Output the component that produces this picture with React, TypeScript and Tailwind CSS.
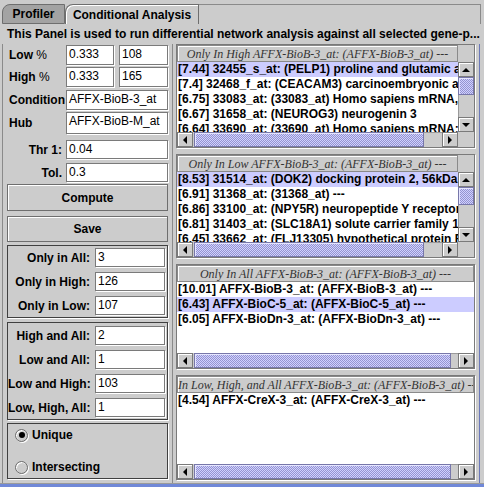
import React from 'react';

type Dir = 'up' | 'down' | 'left' | 'right';

function Arrow({ dir }: { dir: Dir }) {
  const vertical = dir === 'up' || dir === 'down';
  const pts = {
    up: '0,4 4,0 8,4',
    down: '0,0 8,0 4,4',
    left: '4,0 4,8 0,4',
    right: '0,0 0,8 4,4',
  }[dir];
  return (
    <svg width={vertical ? 8 : 4} height={vertical ? 4 : 8} viewBox={vertical ? '0 0 8 4' : '0 0 4 8'}>
      <polygon points={pts} fill="#000" />
    </svg>
  );
}

function ArrowButton({ dir }: { dir: Dir }) {
  const size = dir === 'up' || dir === 'down' ? 'h-[15px] w-full' : 'w-[16px] h-full';
  return (
    <div className={`${size} shrink-0 flex items-center justify-center bg-[#cccccc] border border-[#7a7a7a] shadow-[inset_1px_1px_0_#ffffff]`}>
      <Arrow dir={dir} />
    </div>
  );
}

const thumb =
  'bg-[#ccccff] bg-[repeating-conic-gradient(#9595d0_0_25%,#d0d0ff_0_50%)] bg-[length:2px_2px] border border-[#7777aa] shadow-[inset_1px_1px_0_#e6e6ff]';

function HScroll({ thumbW }: { thumbW: string }) {
  return (
    <div className="flex h-[15px] flex-1 bg-[#cccccc]">
      <ArrowButton dir="left" />
      <div className={`${thumbW} ml-[1px] h-full ${thumb}`} />
      <div className="flex-1 border-t border-[#9a9a9a]" />
      <ArrowButton dir="right" />
    </div>
  );
}

function VScroll() {
  return (
    <div className="flex w-[16px] shrink-0 flex-col bg-[#cccccc]">
      <ArrowButton dir="up" />
      <div className={`h-[18px] w-full ${thumb}`} />
      <div className="flex-1 border-l border-[#9a9a9a]" />
      <ArrowButton dir="down" />
    </div>
  );
}

function ListPane({
  title,
  rows,
  selected,
  vscroll,
  h,
  left,
}: {
  title: string;
  rows: string[];
  selected: number;
  vscroll: boolean;
  h: string;
  left?: boolean;
}) {
  return (
    <div className={`${h} flex flex-col border border-[#7a7a7a] shadow-[1px_1px_0_#ffffff]`}>
      <div className="flex h-[17px] shrink-0">
        <div
          className={`flex flex-1 items-center ${left ? 'justify-start' : 'justify-center'} overflow-hidden whitespace-nowrap border border-[#8a8a8a] bg-[#cccccc] shadow-[inset_1px_1px_0_#ffffff] font-['Liberation_Serif',serif] text-[12px] italic text-[#333333]`}
        >
          {title}
        </div>
        {vscroll && <div className="w-[16px] bg-[#cccccc]" />}
      </div>
      <div className="flex min-h-0 flex-1">
        <div className="flex-1 overflow-hidden bg-white">
          {rows.map((r, i) => (
            <div
              key={i}
              className={`h-[15px] whitespace-nowrap pl-[1px] text-[12px] font-bold leading-[15px] ${i === selected ? 'bg-[#ccccff]' : ''}`}
            >
              {r}
            </div>
          ))}
        </div>
        {vscroll && <VScroll />}
      </div>
      <div className="flex h-[15px] shrink-0">
        <HScroll thumbW={vscroll ? 'w-[230px]' : 'w-[257px]'} />
        {vscroll && <div className="w-[16px] bg-[#cccccc]" />}
      </div>
    </div>
  );
}

function Field({ value, w }: { value: string; w: string }) {
  return (
    <div className={`${w} h-full shrink-0 overflow-hidden whitespace-nowrap border border-[#7a7a7a] bg-white pl-[2px] text-[12px] leading-[17px] shadow-[1px_1px_0_#ffffff]`}>
      {value}
    </div>
  );
}

function BoxRow({ label, value }: { label: string; value: string }) {
  return (
    <div className="flex h-[19px] items-center">
      <div className="w-[82px] shrink-0 whitespace-nowrap text-right text-[12px] font-bold">{label}</div>
      <div className="ml-[5px] h-full">
        <Field value={value} w="w-[70px]" />
      </div>
    </div>
  );
}

function Radio({ checked, label }: { checked: boolean; label: string }) {
  return (
    <div className="flex items-center">
      <div className="ml-[7px] flex h-[13px] w-[13px] items-center justify-center rounded-full border border-[#6e6e6e] shadow-[1px_1px_0_#ffffff,inset_1px_1px_0_#ffffff]">
        {checked && <div className="h-[6px] w-[6px] rounded-full bg-black" />}
      </div>
      <span className="ml-[4px] text-[12px] font-bold">{label}</span>
    </div>
  );
}

const high = [
  '[7.44] 32455_s_at: (PELP1) proline and glutamic acid/leucine-rich protein 1',
  '[7.4] 32468_f_at: (CEACAM3) carcinoembryonic antigen-related cell adhesion',
  '[6.75] 33083_at: (33083_at) Homo sapiens mRNA, cDNA clone',
  '[6.67] 31658_at: (NEUROG3) neurogenin 3',
  '[6.64] 33690_at: (33690_at) Homo sapiens mRNA; cDNA',
];

const low = [
  '[8.53] 31514_at: (DOK2) docking protein 2, 56kDa',
  '[6.91] 31368_at: (31368_at) ---',
  '[6.86] 33100_at: (NPY5R) neuropeptide Y receptor Y5',
  '[6.81] 31403_at: (SLC18A1) solute carrier family 18',
  '[6.45] 33662_at: (FLJ13305) hypothetical protein FLJ13305',
];

const all = [
  '[10.01] AFFX-BioB-3_at: (AFFX-BioB-3_at) ---',
  '[6.43] AFFX-BioC-5_at: (AFFX-BioC-5_at) ---',
  '[6.05] AFFX-BioDn-3_at: (AFFX-BioDn-3_at) ---',
];

export default function App() {
  return (
    <div className="h-[487px] w-[484px] overflow-hidden bg-[#cccccc] font-['Liberation_Sans',Arial,sans-serif] text-black">
      {/* tabs */}
      <div className="flex h-[24px] items-end pl-[2px]">
        <div className="flex h-[20px] w-[63px] items-center justify-center rounded-tl-[8px] border border-[#6e6e6e] bg-[#a3a3a3] text-[12px] font-bold">
          Profiler
        </div>
        <div className="flex h-[20px] w-[134px] items-center justify-center rounded-tl-[8px] border-l border-r border-t border-[#6e6e6e] bg-[#cccccc] text-[12px] font-bold shadow-[inset_1px_1px_0_#ffffff]">
          Conditional Analysis
        </div>
        <div className="mr-[3px] h-[20px] flex-1 border-r border-t border-[#8a8a8a]" />
      </div>

      <div className="flex h-[20px] items-center whitespace-nowrap pl-[7px] text-[12px] font-bold">
        This Panel is used to run differential network analysis against all selected gene-p...
      </div>

      <div className="flex h-[439px]">
        {/* left controls */}
        <div className="ml-[2px] flex w-[171px] shrink-0 flex-col border-l border-r border-[#8a8a8a] px-[4px] pt-[1px]">
          <div className="flex h-[20px] items-center">
            <div className="w-[59px] pl-[2px] text-[12px]">
              <span className="font-bold">Low</span> %
            </div>
            <Field value="0.333" w="w-[48px]" />
            <div className="ml-[5px] h-full">
              <Field value="108" w="w-[49px]" />
            </div>
          </div>
          <div className="mt-[2px] flex h-[20px] items-center">
            <div className="w-[59px] pl-[2px] text-[12px]">
              <span className="font-bold">High</span> %
            </div>
            <Field value="0.333" w="w-[48px]" />
            <div className="ml-[5px] h-full">
              <Field value="165" w="w-[49px]" />
            </div>
          </div>
          <div className="mt-[3px] flex h-[20px] items-center">
            <div className="w-[59px] pl-[2px] text-[12px] font-bold">Condition</div>
            <Field value="AFFX-BioB-3_at" w="w-[102px]" />
          </div>
          <div className="mt-[2px] flex h-[22px] items-center">
            <div className="w-[59px] pl-[2px] text-[12px] font-bold">Hub</div>
            <Field value="AFFX-BioB-M_at" w="w-[102px]" />
          </div>
          <div className="mt-[6px] flex h-[19px] items-center">
            <div className="w-[56px] pr-[1px] text-right text-[12px] font-bold">Thr 1:</div>
            <div className="ml-[3px] h-full">
              <Field value="0.04" w="w-[102px]" />
            </div>
          </div>
          <div className="mt-[4px] flex h-[19px] items-center">
            <div className="w-[56px] pr-[1px] text-right text-[12px] font-bold">Tol.</div>
            <div className="ml-[3px] h-full">
              <Field value="0.3" w="w-[102px]" />
            </div>
          </div>
          <div className="mt-[2px] flex h-[27px] items-center justify-center border border-[#6e6e6e] bg-[#cccccc] text-[12px] font-bold shadow-[inset_1px_1px_0_#ffffff]">
            Compute
          </div>
          <div className="mt-[5px] flex h-[26px] items-center justify-center border border-[#6e6e6e] bg-[#cccccc] text-[12px] font-bold shadow-[inset_1px_1px_0_#ffffff]">
            Save
          </div>

          <div className="mt-[3px] flex flex-col gap-[5px] border border-[#404040] pb-[2px] pt-[2px] shadow-[1px_1px_0_#ffffff]">
            <BoxRow label="Only in All:" value="3" />
            <BoxRow label="Only in High:" value="126" />
            <BoxRow label="Only in Low:" value="107" />
          </div>

          <div className="mt-[4px] flex flex-col gap-[5px] border border-[#404040] pb-[2px] pt-[3px] shadow-[1px_1px_0_#ffffff]">
            <BoxRow label="High and All:" value="2" />
            <BoxRow label="Low and All:" value="1" />
            <BoxRow label="Low and High:" value="103" />
            <BoxRow label="Low, High, All:" value="1" />
          </div>

          <div className="mt-[3px] flex h-[56px] flex-col justify-center gap-[14px] border border-[#404040] shadow-[1px_1px_0_#ffffff]">
            <Radio checked label="Unique" />
            <Radio checked={false} label="Intersecting" />
          </div>
        </div>

        {/* result lists */}
        <div className="ml-[3px] flex w-[299px] shrink-0 flex-col gap-[6px]">
          <ListPane h="h-[104px]" title="Only In High AFFX-BioB-3_at: (AFFX-BioB-3_at) ---" rows={high} selected={0} vscroll />
          <ListPane h="h-[104px]" title="Only In Low AFFX-BioB-3_at: (AFFX-BioB-3_at) ---" rows={low} selected={0} vscroll />
          <ListPane h="h-[105px]" title="Only In All AFFX-BioB-3_at: (AFFX-BioB-3_at) ---" rows={all} selected={1} vscroll={false} />
          <ListPane
            h="h-[105px]"
            left
            title="In Low, High, and All AFFX-BioB-3_at: (AFFX-BioB-3_at) ---"
            rows={['[4.54] AFFX-CreX-3_at: (AFFX-CreX-3_at) ---']}
            selected={-1}
            vscroll={false}
          />
        </div>

        <div className="ml-[4px] w-[1px] bg-[#6b78b8]" />
      </div>

      <div className="h-[4px] border-t border-[#9a9a9a] bg-[#7088d8]" />
    </div>
  );
}
